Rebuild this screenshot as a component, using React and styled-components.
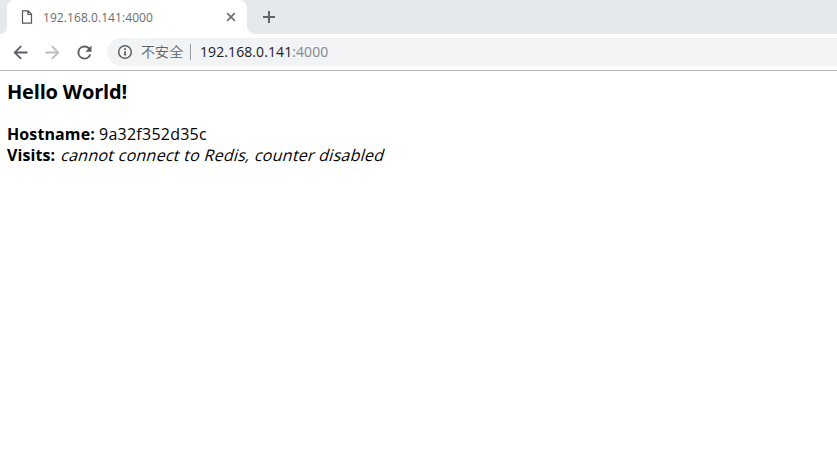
import React from "react";
import styled, { createGlobalStyle } from "styled-components";

const GlobalStyle = createGlobalStyle`
  * { box-sizing: border-box; }
  body { margin: 0; background: #fff; overflow: hidden; }
`;

const Browser = styled.div`
  display: flex;
  flex-direction: column;
  width: 100%;
  height: 100vh;
  background: #fff;
  font-family: "Open Sans", "Noto Sans", "Noto Sans CJK SC", sans-serif;
`;

const TabStrip = styled.div`
  display: flex;
  flex: none;
  height: 34px;
  background: #fff;
`;

const StripStart = styled.div`
  width: 7px;
  background: #e5e9ec;
  border-bottom-right-radius: 7px;
`;

const TabSlot = styled.div`
  display: flex;
  width: 240px;
  background: linear-gradient(#e5e9ec 50%, #fff 50%);
`;

const Tab = styled.div`
  display: flex;
  align-items: center;
  width: 100%;
  padding: 0 10px 0 14px;
  background: #fff;
  border-radius: 8px 8px 0 0;
`;

const TabTitle = styled.span`
  flex: 1;
  margin-left: 10px;
  padding-top: 1px;
  color: #6b6e72;
  font-size: 12px;
  line-height: 33px;
  letter-spacing: ${(p) => p.$track};
`;

const StripRest = styled.div`
  flex: 1;
  display: flex;
  align-items: center;
  padding-left: 15px;
  background: #e5e9ec;
  border-bottom-left-radius: 8px;
`;

const Toolbar = styled.div`
  display: flex;
  flex: none;
  align-items: center;
  height: 37px;
  padding-left: 10.3px;
  border-bottom: 1px solid #b4b5b6;
`;

const NavIcon = styled.svg`
  flex: none;
  width: 21px;
  height: 21px;
  margin-right: 11px;
  fill: ${(p) => p.$color};
`;

const AddressBar = styled.div`
  display: flex;
  align-items: center;
  flex: 1;
  height: 28px;
  margin-left: 0.7px;
  padding-left: 9px;
  background: #f1f3f4;
  border-radius: 14px 0 0 14px;
  white-space: nowrap;
`;

const Security = styled.span`
  width: 50px;
  height: 16px;
  margin-left: 7px;
  border-right: 1px solid #9b9ea2;
  color: #5f6368;
  font-family: "Noto Sans CJK SC", sans-serif;
  font-size: 14px;
  font-weight: 350;
  line-height: 14px;
  letter-spacing: 0.1px;
`;

const Url = styled.span`
  margin-left: 9px;
  color: #202124;
  font-size: 14px;
  line-height: 28px;
  letter-spacing: ${(p) => p.$track};
`;

const Port = styled.span`
  color: #85888c;
`;

const Page = styled.main`
  padding: 9px 7px;
  color: #000;
  font-size: 16px;
  line-height: 21px;
`;

const Heading = styled.h3`
  margin: 0 0 20px;
  font-size: 20px;
  line-height: 24px;
  font-weight: 700;
  letter-spacing: ${(p) => p.$track};
`;

const Line = styled.div`
  height: 21px;
  white-space: pre;
`;

const Label = styled.b`
  letter-spacing: ${(p) => p.$track};
`;

const Value = styled.span`
  letter-spacing: ${(p) => p.$track};
`;

const Note = styled.i`
  display: inline-block;
  margin-left: 1px;
  font-style: normal;
  letter-spacing: ${(p) => p.$track};
  transform: skewX(-16deg);
  transform-origin: 0 16px;
`;

export default function App() {
  return (
    <Browser>
      <GlobalStyle />
      <TabStrip>
        <StripStart />
        <TabSlot>
          <Tab>
            <svg width="12" height="14" viewBox="0 0 12 14" fill="none" stroke="#55585c" strokeWidth="1.2">
              <path d="M1.5 .8H7.2L10.5 4.2V13.2H1.5ZM7 .8V4.5H10.5" />
            </svg>
            <TabTitle $track="0.07px">192.168.0.141:4000</TabTitle>
            <svg width="12" height="12" viewBox="0 0 12 12" stroke="#6b6e72" strokeWidth="1.7">
              <path d="M2.2 2.2 9.8 9.8M9.8 2.2 2.2 9.8" />
            </svg>
          </Tab>
        </TabSlot>
        <StripRest>
          <svg width="14" height="14" viewBox="0 0 14 14" stroke="#5f6368" strokeWidth="2">
            <path d="M7 1V13M1 7H13" />
          </svg>
        </StripRest>
      </TabStrip>
      <Toolbar>
        <NavIcon viewBox="0 0 24 24" $color="#5a5d61">
          <path d="M20 10.8H8L13.5 5.4 12 4 4 12 12 20 13.5 18.6 8 13.2H20Z" />
        </NavIcon>
        <NavIcon viewBox="0 0 24 24" $color="#babcbe">
          <path d="M4 10.8H16L10.5 5.4 12 4 20 12 12 20 10.5 18.6 16 13.2H4Z" />
        </NavIcon>
        <NavIcon viewBox="0 0 24 24" $color="#5a5d61">
          <path d="M17.65 6.35A8 8 0 1 0 19.73 14H17.4A5.8 5.8 0 1 1 12 6.2c1.6 0 3.05.65 4.1 1.7L13 11h7V4Z" />
        </NavIcon>
        <AddressBar>
          <svg width="18" height="18" viewBox="0 0 18 18" fill="none" stroke="#5f6368">
            <circle cx="9" cy="9" r="6.3" strokeWidth="1.5" />
            <path d="M9 8.2V12.4M9 5.3V6.9" strokeWidth="1.8" />
          </svg>
          <Security>不安全</Security>
          <Url $track="0.09px">
            192.168.0.141<Port>:4000</Port>
          </Url>
        </AddressBar>
      </Toolbar>
      <Page>
        <Heading $track="-0.18px">Hello World!</Heading>
        <Line>
          <Label $track="0.1px">Hostname:</Label> <Value $track="0.25px">9a32f352d35c</Value>
        </Line>
        <Line>
          <Label $track="0.1px">Visits:</Label> <Note $track="0.26px">cannot connect to Redis, counter disabled</Note>
        </Line>
      </Page>
    </Browser>
  );
}
